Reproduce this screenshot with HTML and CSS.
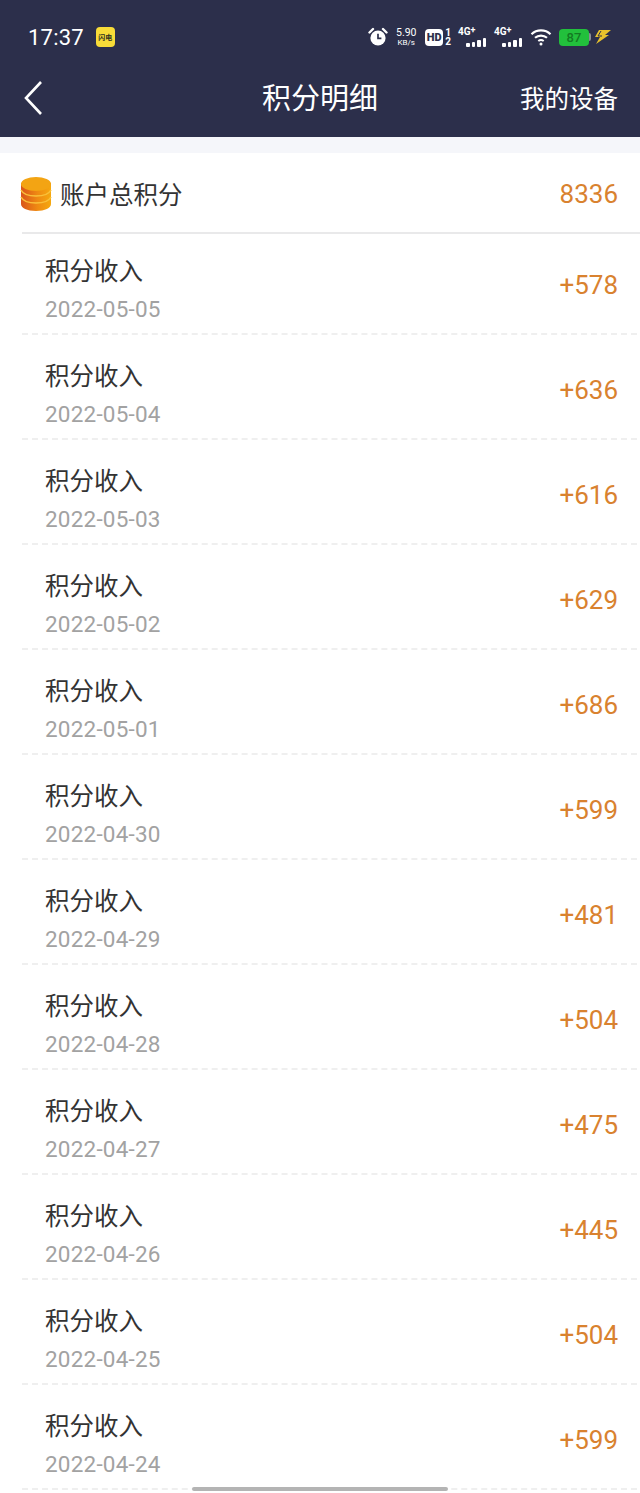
FILE: index.html
```html
<!DOCTYPE html>
<html lang="en">
<head>
    <meta charset="UTF-8">
    <meta name="viewport" content="width=device-width, initial-scale=1.0">
    <link rel="stylesheet" href="styles.css">
</head>
<body>
    <header class="top-bar">
        <div class="status-bar">
            <div class="status-left">
                <span class="clock">17:37</span>
                <span class="app-badge">闪电</span>
            </div>
            <div class="status-right">
                <svg class="icon-alarm" viewBox="0 0 20 20" width="20" height="20">
                    <circle cx="10" cy="11" r="7.6" fill="#fff"/>
                    <path d="M1.5 5.5 L5 2 M18.5 5.5 L15 2" stroke="#fff" stroke-width="2.4" stroke-linecap="round"/>
                    <path d="M10 6.8 V11.4 H13.4" stroke="#2c2f4b" stroke-width="1.7" fill="none"/>
                </svg>
                <span class="speed"><b>5.90</b><b class="speed-unit">KB/s</b></span>
                <span class="hd-wrap">
                    <span class="hd">HD</span>
                    <span class="hd-nums"><b>1</b><b>2</b></span>
                </span>
                <span class="signal">
                    <span class="signal-label">4G<sup>+</sup></span>
                    <span class="bars"><i class="b1"></i><i class="b2"></i><i class="b3"></i><i class="b4"></i></span>
                </span>
                <span class="signal">
                    <span class="signal-label">4G<sup>+</sup></span>
                    <span class="bars"><i class="b1"></i><i class="b2"></i><i class="b3"></i><i class="b4"></i></span>
                </span>
                <svg class="icon-wifi" viewBox="0 0 22 18" width="22" height="18">
                    <path d="M1.5 6.2 C6.8 1.2 15.2 1.2 20.5 6.2" stroke="#fff" stroke-width="2.2" fill="none"/>
                    <path d="M5 9.8 C8.4 6.8 13.6 6.8 17 9.8" stroke="#fff" stroke-width="2.2" fill="none"/>
                    <path d="M8.3 13 C9.9 11.8 12.1 11.8 13.7 13" stroke="#fff" stroke-width="2" fill="none"/>
                    <circle cx="11" cy="16" r="1.5" fill="#fff"/>
                </svg>
                <span class="battery"><span class="battery-level">87</span><span class="battery-cap"></span></span>
                <svg class="icon-bolt" viewBox="0 0 18 16" width="18" height="16">
                    <path d="M5 1 L17 1 L11 6 L15 6 L2 15 L6 8 L1 8 Z" fill="#e8c22c"/>
                    <path d="M7 2 L4 7 L8 7" stroke="#2c2f4b" stroke-width="1" fill="none"/>
                </svg>
            </div>
        </div>
        <nav class="nav-bar">
            <svg class="back" viewBox="0 0 20 36" width="20" height="36">
                <path d="M18 2 L3 18 L18 34" stroke="#fff" stroke-width="2.6" fill="none"/>
            </svg>
            <h1>积分明细</h1>
            <a class="nav-link">我的设备</a>
        </nav>
    </header>

    <main class="content">
        <div class="total-row">
            <svg class="coins" viewBox="0 0 32 36" width="32" height="36">
                <defs>
                    <linearGradient id="coinSide" x1="0" x2="1" y1="0" y2="0">
                        <stop offset="0" stop-color="#d9541a"/>
                        <stop offset="0.55" stop-color="#ef8a12"/>
                        <stop offset="1" stop-color="#f5a80f"/>
                    </linearGradient>
                </defs>
                <path d="M1 7 V28 C1 32 7 35 16 35 C25 35 31 32 31 28 V7 Z" fill="url(#coinSide)"/>
                <path d="M1 14 C3 18 9 20 16 20 C23 20 29 18 31 14" stroke="#f9c03a" stroke-width="1.6" fill="none"/>
                <path d="M1 21 C3 25 9 27 16 27 C23 27 29 25 31 21" stroke="#f9c03a" stroke-width="1.6" fill="none"/>
                <ellipse cx="16" cy="8" rx="15" ry="7" fill="#f3a413"/>
            </svg>
            <span class="total-label">账户总积分</span>
            <span class="total-value">8336</span>
        </div>

        <ul class="records">
            <li class="record"><div class="record-info"><span class="record-title">积分收入</span><span class="record-date">2022-05-05</span></div><span class="record-points">+578</span></li>
            <li class="record"><div class="record-info"><span class="record-title">积分收入</span><span class="record-date">2022-05-04</span></div><span class="record-points">+636</span></li>
            <li class="record"><div class="record-info"><span class="record-title">积分收入</span><span class="record-date">2022-05-03</span></div><span class="record-points">+616</span></li>
            <li class="record"><div class="record-info"><span class="record-title">积分收入</span><span class="record-date">2022-05-02</span></div><span class="record-points">+629</span></li>
            <li class="record"><div class="record-info"><span class="record-title">积分收入</span><span class="record-date">2022-05-01</span></div><span class="record-points">+686</span></li>
            <li class="record"><div class="record-info"><span class="record-title">积分收入</span><span class="record-date">2022-04-30</span></div><span class="record-points">+599</span></li>
            <li class="record"><div class="record-info"><span class="record-title">积分收入</span><span class="record-date">2022-04-29</span></div><span class="record-points">+481</span></li>
            <li class="record"><div class="record-info"><span class="record-title">积分收入</span><span class="record-date">2022-04-28</span></div><span class="record-points">+504</span></li>
            <li class="record"><div class="record-info"><span class="record-title">积分收入</span><span class="record-date">2022-04-27</span></div><span class="record-points">+475</span></li>
            <li class="record"><div class="record-info"><span class="record-title">积分收入</span><span class="record-date">2022-04-26</span></div><span class="record-points">+445</span></li>
            <li class="record"><div class="record-info"><span class="record-title">积分收入</span><span class="record-date">2022-04-25</span></div><span class="record-points">+504</span></li>
            <li class="record"><div class="record-info"><span class="record-title">积分收入</span><span class="record-date">2022-04-24</span></div><span class="record-points">+599</span></li>
        </ul>
    </main>

    <div class="home-indicator"></div>
</body>
</html>
```

FILE: styles.css
```css
* {
    box-sizing: border-box;
}

body {
    font-family: Roboto, "Noto Sans CJK SC", sans-serif;
    margin: 0;
    height: 1493px;
    overflow: hidden;
    background: #fff;
    position: relative;
}

.top-bar {
    background: #2c2f4b;
    height: 137px;
    color: #fff;
}

.status-bar {
    height: 72px;
    display: flex;
    align-items: center;
    justify-content: space-between;
    padding: 2px 28px 0 28px;
}

.status-left {
    display: flex;
    align-items: center;
    gap: 12px;
}

.clock {
    font-size: 22px;
    letter-spacing: 0.2px;
}

.app-badge {
    width: 19px;
    height: 20px;
    background: #f8dc38;
    border-radius: 4px;
    color: #2c2f20;
    font-size: 7px;
    font-weight: 700;
    display: flex;
    align-items: center;
    justify-content: center;
    white-space: nowrap;
}

.status-right {
    display: flex;
    align-items: center;
}

.icon-alarm {
    margin-right: 6px;
}

.speed {
    display: flex;
    flex-direction: column;
    align-items: center;
    width: 24px;
    margin-right: 7px;
}

.speed b {
    font-weight: 400;
    font-size: 10.5px;
    line-height: 10px;
}

.speed .speed-unit {
    font-size: 8px;
    line-height: 9px;
}

.hd-wrap {
    display: flex;
    align-items: center;
    margin-right: 7px;
}

.hd {
    width: 18px;
    height: 17px;
    background: #fff;
    border-radius: 4px;
    color: #2c2f4b;
    font-size: 11px;
    font-weight: 900;
    display: flex;
    align-items: center;
    justify-content: center;
}

.hd-nums {
    display: flex;
    flex-direction: column;
    margin-left: 2px;
}

.hd-nums b {
    font-size: 10px;
    line-height: 9px;
}

.signal {
    display: flex;
    flex-direction: column;
    width: 28px;
    margin-right: 8px;
}

.signal-label {
    font-size: 10px;
    font-weight: 700;
    line-height: 10px;
    height: 10px;
}

.signal-label sup {
    font-size: 9px;
    line-height: 0;
    vertical-align: 2px;
}

.bars {
    display: flex;
    align-items: flex-end;
    justify-content: flex-end;
    gap: 2px;
    height: 10px;
}

.bars i {
    width: 3.5px;
    background: #fff;
    border-radius: 1px;
}

.bars .b1 {
    height: 4px;
}

.bars .b2 {
    height: 5px;
}

.bars .b3 {
    height: 7px;
}

.bars .b4 {
    height: 9px;
}

.icon-wifi {
    margin-right: 7px;
}

.battery {
    display: flex;
    align-items: center;
}

.battery-level {
    width: 30px;
    height: 17px;
    background: #22c03c;
    border-radius: 4px;
    color: #137a22;
    font-size: 13px;
    font-weight: 500;
    line-height: 17px;
    text-align: center;
}

.battery-cap {
    width: 2px;
    height: 8px;
    background: #8a8c94;
    border-radius: 0 2px 2px 0;
}

.icon-bolt {
    margin-left: 3px;
}

.nav-bar {
    height: 65px;
    position: relative;
    display: flex;
    align-items: center;
    justify-content: space-between;
    padding: 0 22px 14px 23px;
}

.nav-bar h1 {
    position: absolute;
    left: 0;
    right: 0;
    top: 8px;
    margin: 0;
    text-align: center;
    font-size: 29px;
    font-weight: 400;
    line-height: 38px;
}

.nav-link {
    font-size: 24.5px;
    position: relative;
}

.content {
    padding-top: 16px;
    background: #f5f6fa;
}

.total-row {
    height: 81px;
    margin: 0;
    padding: 0 22px 0 20px;
    display: flex;
    align-items: center;
    background: #fff;
    position: relative;
}

.total-row::after {
    content: '';
    position: absolute;
    left: 22px;
    right: 0;
    bottom: 0;
    height: 2px;
    background: #e9e9ea;
}

.coins {
    margin-right: 8px;
}

.total-label {
    font-size: 24.5px;
    color: #333;
}

.total-value {
    margin-left: auto;
    font-size: 26px;
    color: #d9822f;
}

.records {
    list-style: none;
    margin: 0;
    padding: 0 0 0 22px;
    background: #fff;
}

.record {
    height: 105px;
    padding: 0 22px 9px 23px;
    border-bottom: 2px dashed #efefef;
    margin-right: 3px;
    display: flex;
    align-items: flex-end;
    justify-content: space-between;
}

.record:first-child {
    height: 101px;
}

.record-info {
    display: flex;
    flex-direction: column;
    gap: 5px;
}

.record-title {
    font-size: 24.5px;
    line-height: 35px;
    color: #333;
}

.record-date {
    font-size: 22.5px;
    line-height: 30px;
    color: #a2a2a2;
    letter-spacing: 0.2px;
}

.record-points {
    font-size: 26px;
    line-height: 34px;
    color: #d9822f;
    margin-right: -3px;
    margin-bottom: 22px;
}

.home-indicator {
    position: absolute;
    left: 192px;
    top: 1487px;
    width: 256px;
    height: 4px;
    background: #b4b4b4;
    border-radius: 2px;
}
```
